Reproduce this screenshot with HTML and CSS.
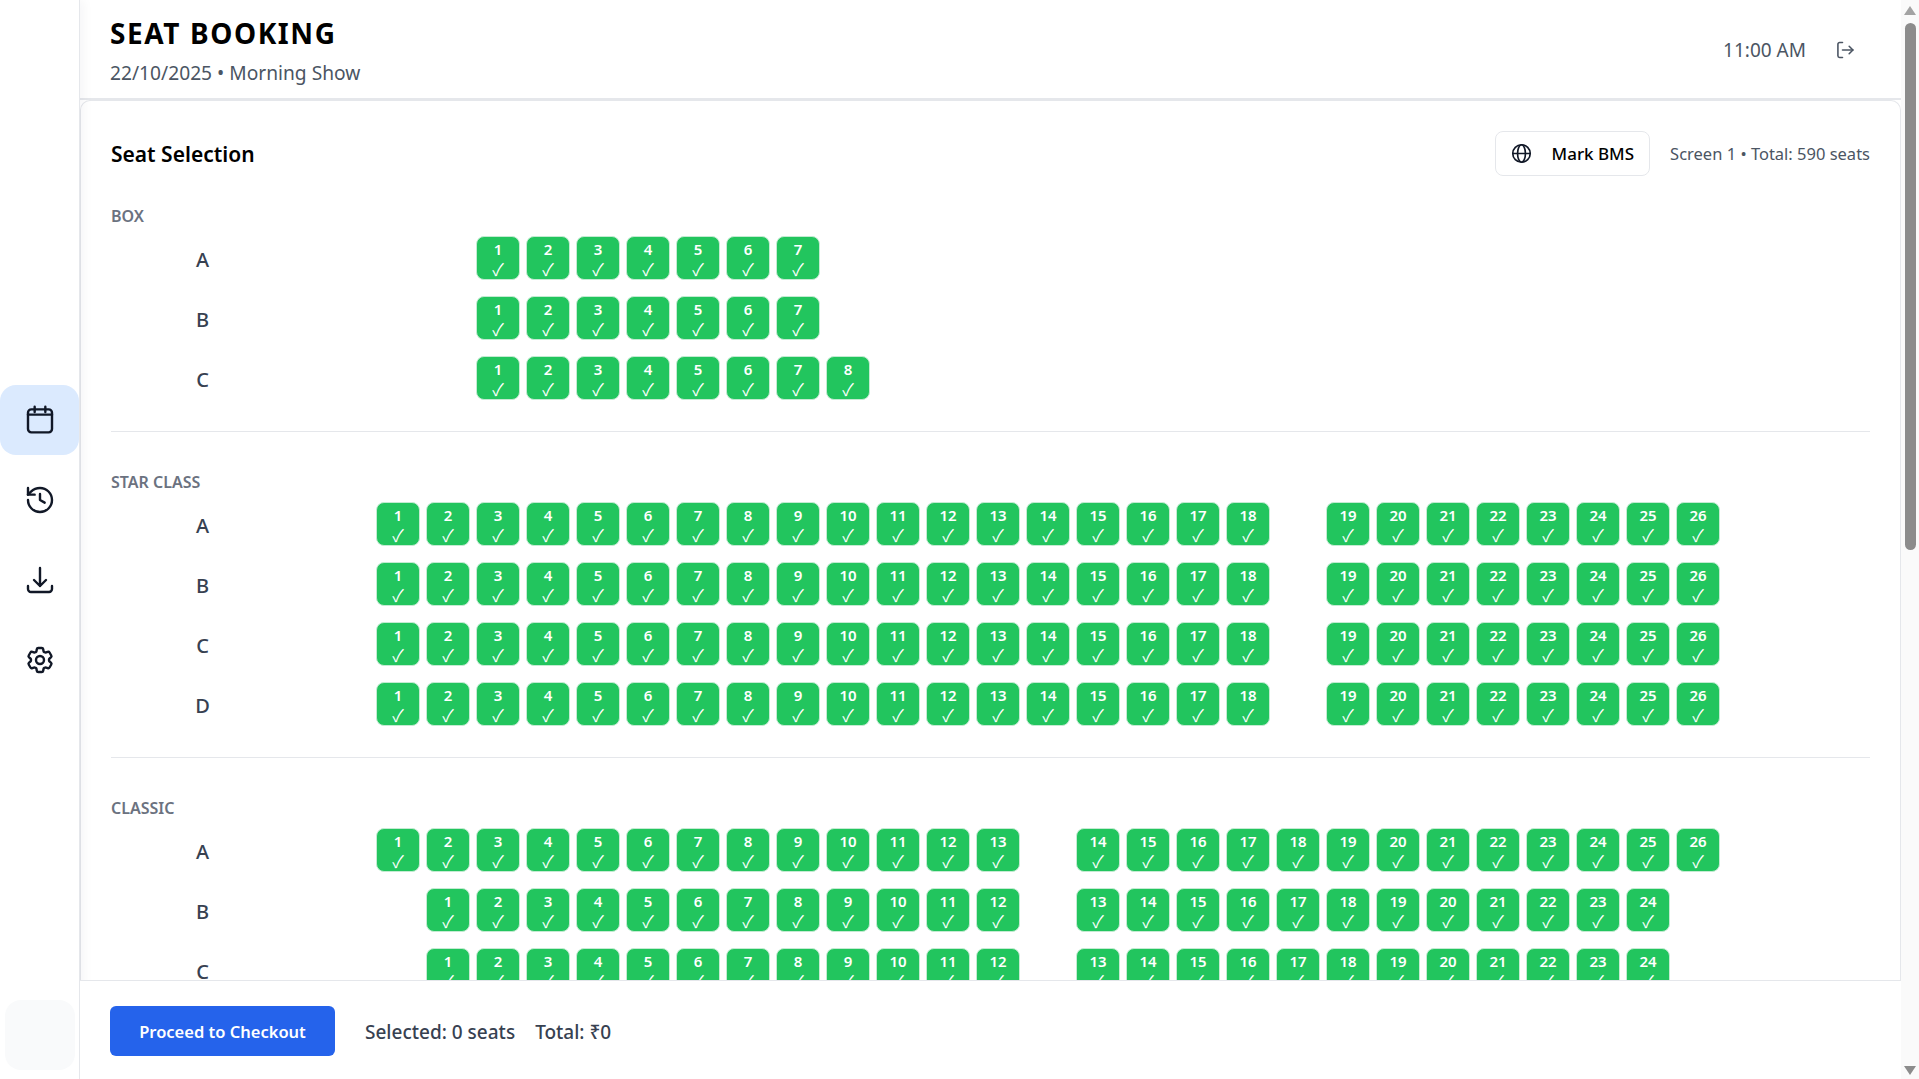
FILE: index.html
```html
<!DOCTYPE html>
<html lang="en">
<head>
<meta charset="utf-8">
<title>Seat Booking</title>
<link rel="stylesheet" href="styles.css">
</head>
<body>
<div class="app">
<aside class="sidebar">
<div></div>
<nav class="nav">
<a class="nav-item active"><svg class="nav-icon" viewBox="0 0 24 24"><path d="M8 2v4M16 2v4"/><rect x="3" y="4" width="18" height="17.25" rx="2.5"/><path d="M3 8h18"/></svg></a>
<a class="nav-item"><svg class="nav-icon" viewBox="0 0 24 24"><path d="M3 12a9 9 0 1 0 9-9 9.75 9.75 0 0 0-6.74 2.74L3 8"/><path d="M3 3v5h5"/><path d="M12 7.5V12l3.5 2"/></svg></a>
<a class="nav-item"><svg class="nav-icon" viewBox="0 0 24 24"><path d="M3 16.5v2.25A2.25 2.25 0 0 0 5.25 21h13.5A2.25 2.25 0 0 0 21 18.75V16.5M16.5 12 12 16.5m0 0L7.5 12m4.5 4.5V3"/></svg></a>
<a class="nav-item"><svg class="nav-icon" viewBox="0 0 24 24"><path d="M9.594 3.94c.09-.542.56-.94 1.11-.94h2.593c.55 0 1.02.398 1.11.94l.213 1.281c.063.374.313.686.645.87.074.04.147.083.22.127.325.196.72.257 1.075.124l1.217-.456a1.125 1.125 0 0 1 1.37.49l1.296 2.247a1.125 1.125 0 0 1-.26 1.431l-1.003.827c-.293.241-.438.613-.43.992a7.723 7.723 0 0 1 0 .255c-.008.378.137.75.43.991l1.004.827c.424.35.534.955.26 1.43l-1.298 2.247a1.125 1.125 0 0 1-1.369.491l-1.217-.456c-.355-.133-.75-.072-1.076.124a6.47 6.47 0 0 1-.22.128c-.331.183-.581.495-.644.869l-.213 1.281c-.09.543-.56.94-1.11.94h-2.594c-.55 0-1.019-.398-1.11-.94l-.213-1.281c-.062-.374-.312-.686-.644-.87a6.52 6.52 0 0 1-.22-.127c-.325-.196-.72-.257-1.076-.124l-1.217.456a1.125 1.125 0 0 1-1.369-.49l-1.297-2.247a1.125 1.125 0 0 1 .26-1.431l1.004-.827c.292-.24.437-.613.43-.991a6.932 6.932 0 0 1 0-.255c.007-.38-.138-.751-.43-.992l-1.004-.827a1.125 1.125 0 0 1-.26-1.43l1.297-2.247a1.125 1.125 0 0 1 1.37-.491l1.216.456c.356.133.751.072 1.076-.124.072-.044.146-.086.22-.128.332-.183.582-.495.644-.869l.214-1.28Z"/><path d="M15 12a3 3 0 1 1-6 0 3 3 0 0 1 6 0Z"/></svg></a>
</nav>
<div class="side-foot"><div class="side-box"></div></div>
</aside>
<main class="main">
<header class="top">
<div>
<h1 class="title">SEAT BOOKING</h1>
<p class="subtitle">22/10/2025 • Morning Show</p>
</div>
<div class="top-right">
<span class="time">11:00 AM</span>
<svg class="logout" viewBox="0 0 24 24"><path d="M9 21H5.5a2 2 0 0 1-2-2V5a2 2 0 0 1 2-2H9"/><path d="m17 16.5 4.5-4.5L17 7.500"/><path d="M21.500 12H9"/></svg>
</div>
</header>
<div class="content">
<section class="card">
<div class="card-head">
<h2 class="card-title">Seat Selection</h2>
<div class="card-tools">
<button class="theatre"><svg class="globe" viewBox="0 0 24 24"><circle cx="12" cy="12" r="10"/><ellipse cx="12" cy="12" rx="4.500" ry="10"/><path d="M2 12h20"/></svg><span>Mark BMS</span></button>
<span class="screen">Screen 1 • Total: 590 seats</span>
</div>
</div>
<div class="block">
<h3 class="block-name">BOX</h3>
<div class="row"><span class="row-name">A</span><div class="seats"><i class="sp"></i><i class="sp"></i><span class="seat">1<b>✓</b></span><span class="seat">2<b>✓</b></span><span class="seat">3<b>✓</b></span><span class="seat">4<b>✓</b></span><span class="seat">5<b>✓</b></span><span class="seat">6<b>✓</b></span><span class="seat">7<b>✓</b></span></div></div>
<div class="row"><span class="row-name">B</span><div class="seats"><i class="sp"></i><i class="sp"></i><span class="seat">1<b>✓</b></span><span class="seat">2<b>✓</b></span><span class="seat">3<b>✓</b></span><span class="seat">4<b>✓</b></span><span class="seat">5<b>✓</b></span><span class="seat">6<b>✓</b></span><span class="seat">7<b>✓</b></span></div></div>
<div class="row"><span class="row-name">C</span><div class="seats"><i class="sp"></i><i class="sp"></i><span class="seat">1<b>✓</b></span><span class="seat">2<b>✓</b></span><span class="seat">3<b>✓</b></span><span class="seat">4<b>✓</b></span><span class="seat">5<b>✓</b></span><span class="seat">6<b>✓</b></span><span class="seat">7<b>✓</b></span><span class="seat">8<b>✓</b></span></div></div>
</div>
<div class="block">
<h3 class="block-name">STAR CLASS</h3>
<div class="row"><span class="row-name">A</span><div class="seats"><span class="seat">1<b>✓</b></span><span class="seat">2<b>✓</b></span><span class="seat">3<b>✓</b></span><span class="seat">4<b>✓</b></span><span class="seat">5<b>✓</b></span><span class="seat">6<b>✓</b></span><span class="seat">7<b>✓</b></span><span class="seat">8<b>✓</b></span><span class="seat">9<b>✓</b></span><span class="seat">10<b>✓</b></span><span class="seat">11<b>✓</b></span><span class="seat">12<b>✓</b></span><span class="seat">13<b>✓</b></span><span class="seat">14<b>✓</b></span><span class="seat">15<b>✓</b></span><span class="seat">16<b>✓</b></span><span class="seat">17<b>✓</b></span><span class="seat">18<b>✓</b></span><i class="sp"></i><span class="seat">19<b>✓</b></span><span class="seat">20<b>✓</b></span><span class="seat">21<b>✓</b></span><span class="seat">22<b>✓</b></span><span class="seat">23<b>✓</b></span><span class="seat">24<b>✓</b></span><span class="seat">25<b>✓</b></span><span class="seat">26<b>✓</b></span></div></div>
<div class="row"><span class="row-name">B</span><div class="seats"><span class="seat">1<b>✓</b></span><span class="seat">2<b>✓</b></span><span class="seat">3<b>✓</b></span><span class="seat">4<b>✓</b></span><span class="seat">5<b>✓</b></span><span class="seat">6<b>✓</b></span><span class="seat">7<b>✓</b></span><span class="seat">8<b>✓</b></span><span class="seat">9<b>✓</b></span><span class="seat">10<b>✓</b></span><span class="seat">11<b>✓</b></span><span class="seat">12<b>✓</b></span><span class="seat">13<b>✓</b></span><span class="seat">14<b>✓</b></span><span class="seat">15<b>✓</b></span><span class="seat">16<b>✓</b></span><span class="seat">17<b>✓</b></span><span class="seat">18<b>✓</b></span><i class="sp"></i><span class="seat">19<b>✓</b></span><span class="seat">20<b>✓</b></span><span class="seat">21<b>✓</b></span><span class="seat">22<b>✓</b></span><span class="seat">23<b>✓</b></span><span class="seat">24<b>✓</b></span><span class="seat">25<b>✓</b></span><span class="seat">26<b>✓</b></span></div></div>
<div class="row"><span class="row-name">C</span><div class="seats"><span class="seat">1<b>✓</b></span><span class="seat">2<b>✓</b></span><span class="seat">3<b>✓</b></span><span class="seat">4<b>✓</b></span><span class="seat">5<b>✓</b></span><span class="seat">6<b>✓</b></span><span class="seat">7<b>✓</b></span><span class="seat">8<b>✓</b></span><span class="seat">9<b>✓</b></span><span class="seat">10<b>✓</b></span><span class="seat">11<b>✓</b></span><span class="seat">12<b>✓</b></span><span class="seat">13<b>✓</b></span><span class="seat">14<b>✓</b></span><span class="seat">15<b>✓</b></span><span class="seat">16<b>✓</b></span><span class="seat">17<b>✓</b></span><span class="seat">18<b>✓</b></span><i class="sp"></i><span class="seat">19<b>✓</b></span><span class="seat">20<b>✓</b></span><span class="seat">21<b>✓</b></span><span class="seat">22<b>✓</b></span><span class="seat">23<b>✓</b></span><span class="seat">24<b>✓</b></span><span class="seat">25<b>✓</b></span><span class="seat">26<b>✓</b></span></div></div>
<div class="row"><span class="row-name">D</span><div class="seats"><span class="seat">1<b>✓</b></span><span class="seat">2<b>✓</b></span><span class="seat">3<b>✓</b></span><span class="seat">4<b>✓</b></span><span class="seat">5<b>✓</b></span><span class="seat">6<b>✓</b></span><span class="seat">7<b>✓</b></span><span class="seat">8<b>✓</b></span><span class="seat">9<b>✓</b></span><span class="seat">10<b>✓</b></span><span class="seat">11<b>✓</b></span><span class="seat">12<b>✓</b></span><span class="seat">13<b>✓</b></span><span class="seat">14<b>✓</b></span><span class="seat">15<b>✓</b></span><span class="seat">16<b>✓</b></span><span class="seat">17<b>✓</b></span><span class="seat">18<b>✓</b></span><i class="sp"></i><span class="seat">19<b>✓</b></span><span class="seat">20<b>✓</b></span><span class="seat">21<b>✓</b></span><span class="seat">22<b>✓</b></span><span class="seat">23<b>✓</b></span><span class="seat">24<b>✓</b></span><span class="seat">25<b>✓</b></span><span class="seat">26<b>✓</b></span></div></div>
</div>
<div class="block">
<h3 class="block-name">CLASSIC</h3>
<div class="row"><span class="row-name">A</span><div class="seats"><span class="seat">1<b>✓</b></span><span class="seat">2<b>✓</b></span><span class="seat">3<b>✓</b></span><span class="seat">4<b>✓</b></span><span class="seat">5<b>✓</b></span><span class="seat">6<b>✓</b></span><span class="seat">7<b>✓</b></span><span class="seat">8<b>✓</b></span><span class="seat">9<b>✓</b></span><span class="seat">10<b>✓</b></span><span class="seat">11<b>✓</b></span><span class="seat">12<b>✓</b></span><span class="seat">13<b>✓</b></span><i class="sp"></i><span class="seat">14<b>✓</b></span><span class="seat">15<b>✓</b></span><span class="seat">16<b>✓</b></span><span class="seat">17<b>✓</b></span><span class="seat">18<b>✓</b></span><span class="seat">19<b>✓</b></span><span class="seat">20<b>✓</b></span><span class="seat">21<b>✓</b></span><span class="seat">22<b>✓</b></span><span class="seat">23<b>✓</b></span><span class="seat">24<b>✓</b></span><span class="seat">25<b>✓</b></span><span class="seat">26<b>✓</b></span></div></div>
<div class="row"><span class="row-name">B</span><div class="seats"><i class="sp"></i><span class="seat">1<b>✓</b></span><span class="seat">2<b>✓</b></span><span class="seat">3<b>✓</b></span><span class="seat">4<b>✓</b></span><span class="seat">5<b>✓</b></span><span class="seat">6<b>✓</b></span><span class="seat">7<b>✓</b></span><span class="seat">8<b>✓</b></span><span class="seat">9<b>✓</b></span><span class="seat">10<b>✓</b></span><span class="seat">11<b>✓</b></span><span class="seat">12<b>✓</b></span><i class="sp"></i><span class="seat">13<b>✓</b></span><span class="seat">14<b>✓</b></span><span class="seat">15<b>✓</b></span><span class="seat">16<b>✓</b></span><span class="seat">17<b>✓</b></span><span class="seat">18<b>✓</b></span><span class="seat">19<b>✓</b></span><span class="seat">20<b>✓</b></span><span class="seat">21<b>✓</b></span><span class="seat">22<b>✓</b></span><span class="seat">23<b>✓</b></span><span class="seat">24<b>✓</b></span></div></div>
<div class="row"><span class="row-name">C</span><div class="seats"><i class="sp"></i><span class="seat">1<b>✓</b></span><span class="seat">2<b>✓</b></span><span class="seat">3<b>✓</b></span><span class="seat">4<b>✓</b></span><span class="seat">5<b>✓</b></span><span class="seat">6<b>✓</b></span><span class="seat">7<b>✓</b></span><span class="seat">8<b>✓</b></span><span class="seat">9<b>✓</b></span><span class="seat">10<b>✓</b></span><span class="seat">11<b>✓</b></span><span class="seat">12<b>✓</b></span><i class="sp"></i><span class="seat">13<b>✓</b></span><span class="seat">14<b>✓</b></span><span class="seat">15<b>✓</b></span><span class="seat">16<b>✓</b></span><span class="seat">17<b>✓</b></span><span class="seat">18<b>✓</b></span><span class="seat">19<b>✓</b></span><span class="seat">20<b>✓</b></span><span class="seat">21<b>✓</b></span><span class="seat">22<b>✓</b></span><span class="seat">23<b>✓</b></span><span class="seat">24<b>✓</b></span></div></div>
</div>
</section>
</div>
<footer class="foot">
<button class="checkout">Proceed to Checkout</button>
<span class="summary">Selected: 0 seats</span>
<span class="summary">Total: ₹0</span>
</footer>
</main>
<div class="scrollbar">
<span class="arrow-up"></span>
<span class="thumb"></span>
<span class="arrow-down"></span>
</div>
</div>
</body>
</html>
```
FILE: styles.css
```css
* { box-sizing: border-box; }
html, body { margin: 0; height: 100%; overflow: hidden; }
body { font-family: "Noto Sans", "Open Sans", sans-serif; color: #111827; background: #fff; }
.app { display: flex; height: 1079px; }

.sidebar { position: relative; z-index: 1; flex: 0 0 80px; display: grid; grid-template-rows: 1fr auto 1fr; background: #fff; border-right: 1px solid #e5e7eb; box-shadow: 4px 0 10px rgba(17, 24, 39, .04); }
.nav { display: flex; flex-direction: column; gap: 10px; }
.nav-item { display: flex; align-items: center; justify-content: center; height: 70px; border-radius: 16px; }
.nav-item.active { background: #dbeafe; }
.nav-icon { width: 32px; height: 32px; fill: none; stroke: #111827; stroke-width: 1.8; stroke-linecap: round; stroke-linejoin: round; }
.side-foot { display: flex; align-items: flex-end; padding: 0 4px 9px 5px; }
.side-box { width: 100%; height: 70px; border-radius: 16px; background: #f9fafb; }

.main { flex: 1; min-width: 0; display: flex; flex-direction: column; background: #fff; }
.top { flex: 0 0 100px; display: flex; align-items: center; justify-content: space-between; padding: 2px 46px 0 30px; border-bottom: 2px solid #e5e7eb; }
.title { margin: 0; font-size: 28px; line-height: 38px; font-weight: 700; color: #000; letter-spacing: 1.6px; }
.subtitle { margin: 8px 0 0; font-size: 19.2px; line-height: 26px; color: #4b5563; }
.top-right { display: flex; align-items: center; gap: 29px; }
.time { font-size: 19px; color: #4b5563; }
.logout { width: 20px; height: 20px; fill: none; stroke: #4b5563; stroke-width: 1.9; stroke-linecap: round; stroke-linejoin: round; }

.content { flex: 1; min-height: 0; overflow: hidden; }
.card { height: 100%; padding: 29px 30px 0; background: #fff; border: 1px solid #e5e7eb; border-bottom: 0; border-radius: 10px 10px 0 0; overflow: hidden; }
.card-head { display: flex; align-items: center; justify-content: space-between; height: 46px; margin-bottom: 29px; }
.card-title { margin: 2px 0 0; font-size: 21px; font-weight: 600; color: #000; }
.card-tools { display: flex; align-items: center; gap: 20px; }
.theatre { display: flex; align-items: center; gap: 20px; height: 45px; padding: 0 15px; font: 500 17px "Noto Sans", sans-serif; color: #000; background: #fff; border: 1px solid #e5e7eb; border-radius: 8px; }
.globe { width: 21px; height: 21px; fill: none; stroke: #111827; stroke-width: 1.900; }
.screen { font-size: 16.5px; color: #4b5563; }

.block { padding-bottom: 31px; margin-bottom: 39px; border-bottom: 1px solid #e5e7eb; }
.block-name { margin: 0 0 9px; font-size: 16px; line-height: 22px; font-weight: 600; color: #6b7280; }
.row { display: flex; align-items: center; margin-top: 16px; }
.block-name + .row { margin-top: 0; }
.row-name { flex: 0 0 183px; padding-top: 2px; text-align: center; font-size: 20px; font-weight: 500; color: #374151; }
.seats { display: flex; gap: 6px; margin-left: 82px; }
.sp { flex: 0 0 44px; }
.seat { flex: 0 0 44px; height: 44px; display: flex; flex-direction: column; align-items: center; justify-content: center; padding-top: 1px; font-size: 15px; line-height: 20px; font-weight: 600; color: #fff; background: #22c55e; border: 1px solid #c4ebd2; border-radius: 8px; }
.seat b { font-family: "Noto Sans CJK JP", "DejaVu Sans", sans-serif; font-size: 17px; line-height: 20px; font-weight: 400; }

.foot { position: relative; z-index: 2; flex: 0 0 99px; display: flex; align-items: center; gap: 20px; padding: 2px 30px 0; background: #fff; border-top: 1px solid #e5e7eb; }
.checkout { height: 50px; width: 225px; margin-right: 10px; font: 600 16.500px "Noto Sans", sans-serif; color: #fff; background: #2563eb; border: 0; border-radius: 6px; }
.summary { padding-top: 1px; font-size: 19px; font-weight: 500; color: #374151; }

.scrollbar { flex: 0 0 18px; display: flex; flex-direction: column; align-items: center; padding: 6px 0 4px; background: #fafafa; }
.arrow-up { border: solid transparent; border-width: 0 6px 9px; border-bottom-color: #a3a3a3; }
.thumb { width: 11px; height: 527px; margin-top: 8px; background: #8c8c8c; border-radius: 6px; }
.arrow-down { margin-top: auto; border: solid transparent; border-width: 9px 6px 0; border-top-color: #8c8c8c; }
```
